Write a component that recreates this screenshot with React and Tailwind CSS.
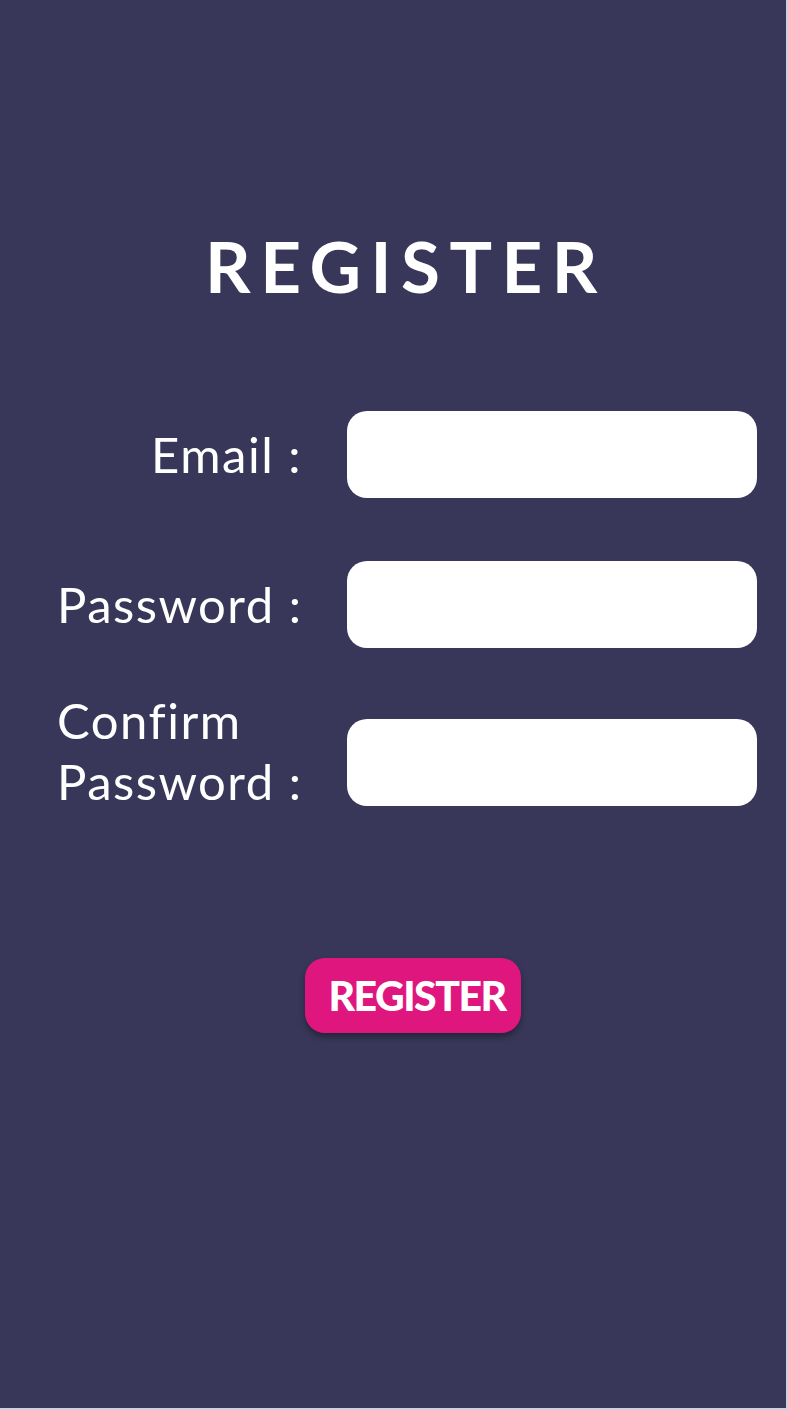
import React from 'react';

const font = { fontFamily: 'Lato, "Noto Sans", sans-serif' };

function Field({ label, align = 'right', type = 'text', wrap = false }) {
  return (
    <div className={`flex ${wrap ? 'items-start' : 'items-center'}`}>
      <label
        className={`w-[245px] shrink-0 whitespace-nowrap text-[49px] leading-[61px] tracking-[1.5px] text-white ${
          align === 'right' ? 'text-right' : 'text-left'
        }`}
      >
        {label}
      </label>
      <input
        type={type}
        className={`ml-[45px] h-[87px] w-[410px] rounded-[20px] bg-white px-5 text-2xl text-gray-800 outline-none ${
          wrap ? 'mt-[29px]' : ''
        }`}
      />
    </div>
  );
}

export default function App() {
  return (
    <div className="min-h-[1410px] w-[788px] bg-[#cfcfde]" style={font}>
      <div className="flex h-[1408px] w-[786px] flex-col bg-[#383759]">
        <h1 className="mt-[230px] pl-[26px] text-center text-[71px] font-bold leading-none tracking-[9.5px] text-white">
          REGISTER
        </h1>

        <form className="mt-[110px] flex flex-col pl-[57px]" onSubmit={(e) => e.preventDefault()}>
          <div className="flex flex-col gap-[63px]">
            <Field label={'Email\u00a0:'} />
            <Field label={'Password\u00a0:'} type="password" />
          </div>
          <div className="mt-[42px]">
            <Field
              label={
                <>
                  Confirm
                  <br />
                  {'Password\u00a0:'}
                </>
              }
              align="left"
              type="password"
              wrap
            />
          </div>

          <div className="mt-[146px] flex justify-center pr-[57px]">
            <button
              type="submit"
              className="ml-[40px] h-[75px] w-[216px] rounded-[20px] bg-[#e0167f] pl-[8px] text-[41px] font-black tracking-[-1.5px] text-white shadow-[0_4px_6px_rgba(0,0,0,0.35)]"
            >
              REGISTER
            </button>
          </div>
        </form>
      </div>
    </div>
  );
}
